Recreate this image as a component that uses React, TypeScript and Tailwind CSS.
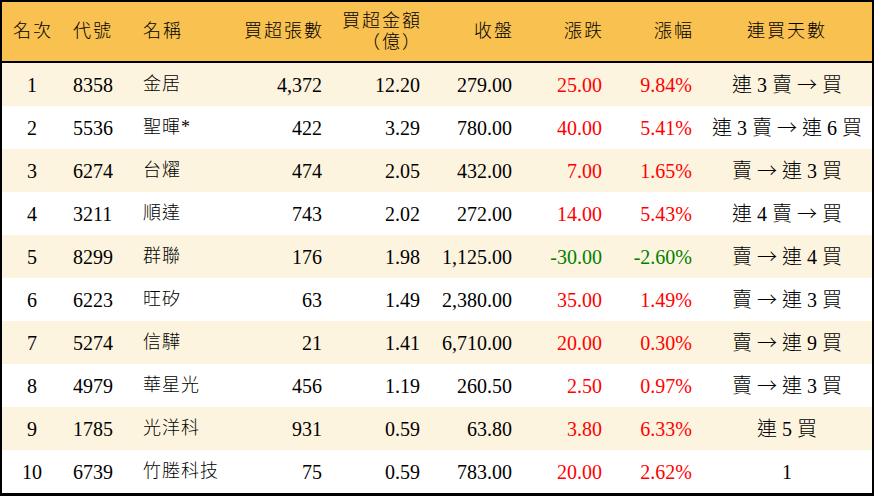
import React from "react"

type Row = {
  rank: number
  code: string
  name: string
  vol: string
  amt: string
  close: string
  chg: string
  pct: string
  streak: string
}

const rows: Row[] = [
  { rank: 1, code: "8358", name: "金居", vol: "4,372", amt: "12.20", close: "279.00", chg: "25.00", pct: "9.84%", streak: "連 3 賣 → 買" },
  { rank: 2, code: "5536", name: "聖暉*", vol: "422", amt: "3.29", close: "780.00", chg: "40.00", pct: "5.41%", streak: "連 3 賣 → 連 6 買" },
  { rank: 3, code: "6274", name: "台燿", vol: "474", amt: "2.05", close: "432.00", chg: "7.00", pct: "1.65%", streak: "賣 → 連 3 買" },
  { rank: 4, code: "3211", name: "順達", vol: "743", amt: "2.02", close: "272.00", chg: "14.00", pct: "5.43%", streak: "連 4 賣 → 買" },
  { rank: 5, code: "8299", name: "群聯", vol: "176", amt: "1.98", close: "1,125.00", chg: "-30.00", pct: "-2.60%", streak: "賣 → 連 4 買" },
  { rank: 6, code: "6223", name: "旺矽", vol: "63", amt: "1.49", close: "2,380.00", chg: "35.00", pct: "1.49%", streak: "賣 → 連 3 買" },
  { rank: 7, code: "5274", name: "信驊", vol: "21", amt: "1.41", close: "6,710.00", chg: "20.00", pct: "0.30%", streak: "賣 → 連 9 買" },
  { rank: 8, code: "4979", name: "華星光", vol: "456", amt: "1.19", close: "260.50", chg: "2.50", pct: "0.97%", streak: "賣 → 連 3 買" },
  { rank: 9, code: "1785", name: "光洋科", vol: "931", amt: "0.59", close: "63.80", chg: "3.80", pct: "6.33%", streak: "連 5 買" },
  { rank: 10, code: "6739", name: "竹塍科技", vol: "75", amt: "0.59", close: "783.00", chg: "20.00", pct: "2.62%", streak: "1" },
]

const cols = "grid grid-cols-[60px_71px_107px_92px_98px_92px_90px_90px_170px]"

// arrow drawn with the CJK face so it is a full-width arrow like the source
function Streak({ text }: { text: string }) {
  const parts = text.split("→")
  return (
    <div className="text-center whitespace-pre">
      {parts.map((p, i) => (
        <React.Fragment key={i}>
          {i > 0 && <span style={{ fontFamily: '"Noto Sans CJK TC", sans-serif' }}>→</span>}
          {p}
        </React.Fragment>
      ))}
    </div>
  )
}

export default function App() {
  return (
    <div
      className="w-[874px] h-[496px] bg-white border-x-2 border-t-2 border-b-[3px] border-black text-black font-light"
      style={{ fontFamily: '"Liberation Serif", "Noto Sans CJK TC", serif' }}
    >
      {/* header */}
      <div className={`${cols} h-[61px] bg-[#f8c150] border-b-2 border-black items-center text-[18px] tracking-[2px]`}>
        <div className="text-center pl-[2px]">名次</div>
        <div className="pl-[11px]">代號</div>
        <div className="pl-[10px]">名稱</div>
        <div className="text-right pr-[8px]">買超張數</div>
        <div className="text-right pr-[8px] leading-[21px]">
          <div>買超金額</div>
          <div>（億）</div>
        </div>
        <div className="text-right pr-[8px]">收盤</div>
        <div className="text-right pr-[8px]">漲跌</div>
        <div className="text-right pr-[8px]">漲幅</div>
        <div className="text-center">連買天數</div>
      </div>

      {rows.map((r, i) => {
        const color = r.chg.startsWith("-") ? "text-[#008000]" : "text-[#ff0000]"
        return (
          <div
            key={r.rank}
            className={`${cols} h-[43px] items-center text-[20px] ${i % 2 === 0 ? "bg-[#fdf4df]" : "bg-white"}`}
          >
            <div className="text-center">{r.rank}</div>
            <div className="pl-[11px]">{r.code}</div>
            <div className="pl-[10px] text-[18px] tracking-[1px]">{r.name}</div>
            <div className="text-right pr-[10px]">{r.vol}</div>
            <div className="text-right pr-[10px]">{r.amt}</div>
            <div className="text-right pr-[10px]">{r.close}</div>
            <div className={`text-right pr-[10px] ${color}`}>{r.chg}</div>
            <div className={`text-right pr-[10px] ${color}`}>{r.pct}</div>
            <Streak text={r.streak} />
          </div>
        )
      })}
    </div>
  )
}
